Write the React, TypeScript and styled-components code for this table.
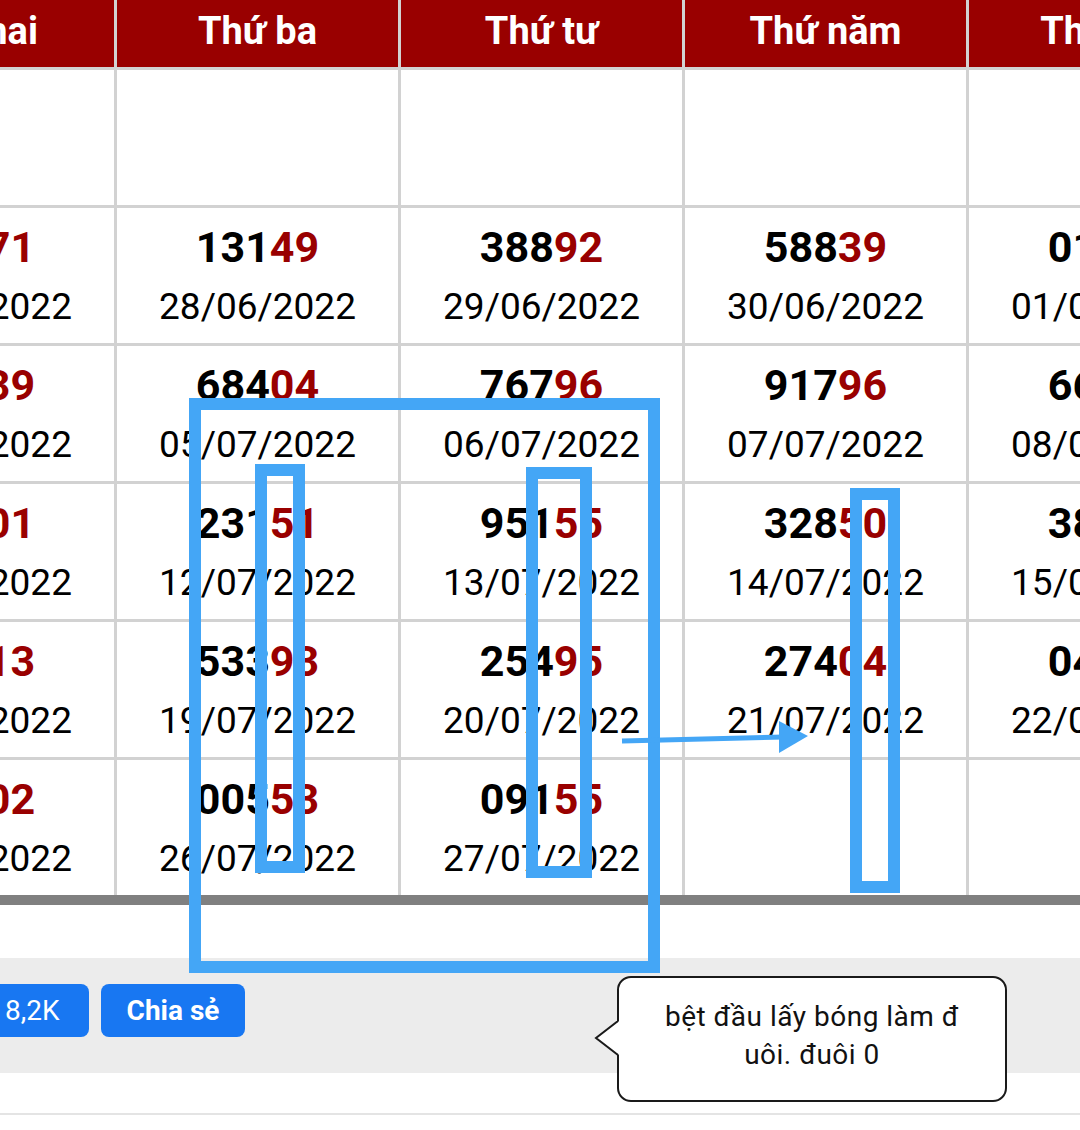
import styled, { createGlobalStyle } from "styled-components";
import { ThumbsUp } from "lucide-react";

const GlobalStyle = createGlobalStyle`
  html, body {
    margin: 0;
    padding: 0;
    background: #fff;
  }
  body {
    font-family: Roboto, "Noto Sans", "Liberation Sans", sans-serif;
    overflow: hidden;
  }
`;

type Result = { num: string; date: string } | null;

const days = ["Thứ hai", "Thứ ba", "Thứ tư", "Thứ năm", "Thứ sáu"];

const rows: Result[][] = [
  [null, null, null, null, null],
  [
    { num: "48271", date: "27/06/2022" },
    { num: "13149", date: "28/06/2022" },
    { num: "38892", date: "29/06/2022" },
    { num: "58839", date: "30/06/2022" },
    { num: "01376", date: "01/07/2022" },
  ],
  [
    { num: "15039", date: "04/07/2022" },
    { num: "68404", date: "05/07/2022" },
    { num: "76796", date: "06/07/2022" },
    { num: "91796", date: "07/07/2022" },
    { num: "66512", date: "08/07/2022" },
  ],
  [
    { num: "62301", date: "11/07/2022" },
    { num: "23151", date: "12/07/2022" },
    { num: "95155", date: "13/07/2022" },
    { num: "32850", date: "14/07/2022" },
    { num: "38047", date: "15/07/2022" },
  ],
  [
    { num: "90713", date: "18/07/2022" },
    { num: "53393", date: "19/07/2022" },
    { num: "25495", date: "20/07/2022" },
    { num: "27404", date: "21/07/2022" },
    { num: "04619", date: "22/07/2022" },
  ],
  [
    { num: "37402", date: "25/07/2022" },
    { num: "00553", date: "26/07/2022" },
    { num: "09155", date: "27/07/2022" },
    null,
    null,
  ],
];

export default function App() {
  return (
    <Page>
      <GlobalStyle />
      <Table>
        {days.map((d) => (
          <HeadCell key={d}>{d}</HeadCell>
        ))}
        {rows.map((row, i) =>
          row.map((r, j) => (
            <Cell key={`${i}-${j}`}>
              {r && (
                <>
                  <Num>
                    {r.num.slice(0, 3)}
                    <Tail>{r.num.slice(3)}</Tail>
                  </Num>
                  <DateText>{r.date}</DateText>
                </>
              )}
            </Cell>
          ))
        )}
      </Table>
      <ScrollBar />
      <Spacer />
      <ShareBar>
        <Buttons>
          <FbButton>
            <ThumbsUp size={24} fill="#fff" strokeWidth={1.5} />
            8,2K
          </FbButton>
          <FbButton $bold>Chia sẻ</FbButton>
        </Buttons>
      </ShareBar>
      <Footer />

      <Marks viewBox="0 0 1080 1130">
        <rect x="195" y="404" width="459" height="563" />
        <rect x="261" y="470" width="38" height="397" />
        <rect x="532" y="473" width="54" height="399" />
        <rect x="856" y="494" width="38" height="393" />
        <line x1="622" y1="741" x2="784" y2="737" strokeWidth="5" />
        <polygon points="779,721 808,736 779,753" />
      </Marks>

      <Bubble>
        <BubbleTail width="26" height="36" viewBox="0 0 26 36">
          <polygon points="25,0 2,17 25,34" fill="#fff" />
          <polyline points="24,0 2,17 24,34" fill="none" stroke="#1a1a1a" strokeWidth="2" />
        </BubbleTail>
        bệt đầu lấy bóng làm đ
        <br />
        uôi. đuôi 0
      </Bubble>
    </Page>
  );
}

const Page = styled.div`
  position: relative;
  width: 1080px;
  height: 1130px;
  overflow: hidden;
  background: #fff;
`;

const Table = styled.div`
  display: grid;
  grid-template-columns: repeat(5, 281px);
  grid-template-rows: 67px repeat(6, 135px);
  gap: 3px;
  width: max-content;
  margin-left: -167px;
  background: #d2d2d2;
`;

const HeadCell = styled.div`
  display: flex;
  align-items: center;
  justify-content: center;
  padding-bottom: 5px;
  box-sizing: border-box;
  background: #990000;
  color: #fff;
  font-size: 38px;
  font-weight: 700;
`;

const Cell = styled.div`
  display: flex;
  flex-direction: column;
  align-items: center;
  justify-content: center;
  gap: 11px;
  background: #fff;
`;

const Num = styled.div`
  font-size: 43px;
  font-weight: 700;
  line-height: 52px;
  color: #000;
`;

const Tail = styled.span`
  color: #990000;
`;

const DateText = styled.div`
  font-size: 37px;
  line-height: 46px;
  color: #000;
`;

const ScrollBar = styled.div`
  height: 10px;
  background: #808080;
`;

const Spacer = styled.div`
  height: 53px;
`;

const ShareBar = styled.div`
  height: 115px;
  box-sizing: border-box;
  padding-top: 26px;
  background: #ececec;
`;

const Buttons = styled.div`
  display: flex;
  gap: 12px;
  margin-left: -54px;
`;

const FbButton = styled.div<{ $bold?: boolean }>`
  display: flex;
  align-items: center;
  gap: 10px;
  height: 53px;
  padding: ${(p) => (p.$bold ? "0 26px" : "0 29px 0 25px")};
  border-radius: 8px;
  background: #1877f2;
  color: #fff;
  font-size: 28px;
  font-weight: ${(p) => (p.$bold ? 700 : 400)};
`;

const Footer = styled.div`
  height: 40px;
  border-bottom: 2px solid #e4e4e4;
`;

const Marks = styled.svg`
  position: absolute;
  top: 0;
  left: 0;
  width: 1080px;
  height: 1130px;
  pointer-events: none;

  rect {
    fill: none;
    stroke: #44a6f6;
    stroke-width: 12;
  }
  line {
    stroke: #44a6f6;
  }
  polygon {
    fill: #44a6f6;
  }
`;

const Bubble = styled.div`
  position: absolute;
  left: 617px;
  top: 976px;
  width: 390px;
  height: 126px;
  box-sizing: border-box;
  padding-top: 20px;
  border: 2px solid #1a1a1a;
  border-radius: 14px;
  background: #fff;
  color: #111;
  font-size: 28px;
  line-height: 38px;
  letter-spacing: 0.5px;
  text-align: center;
`;

const BubbleTail = styled.svg`
  position: absolute;
  left: -25px;
  top: 43px;
`;
